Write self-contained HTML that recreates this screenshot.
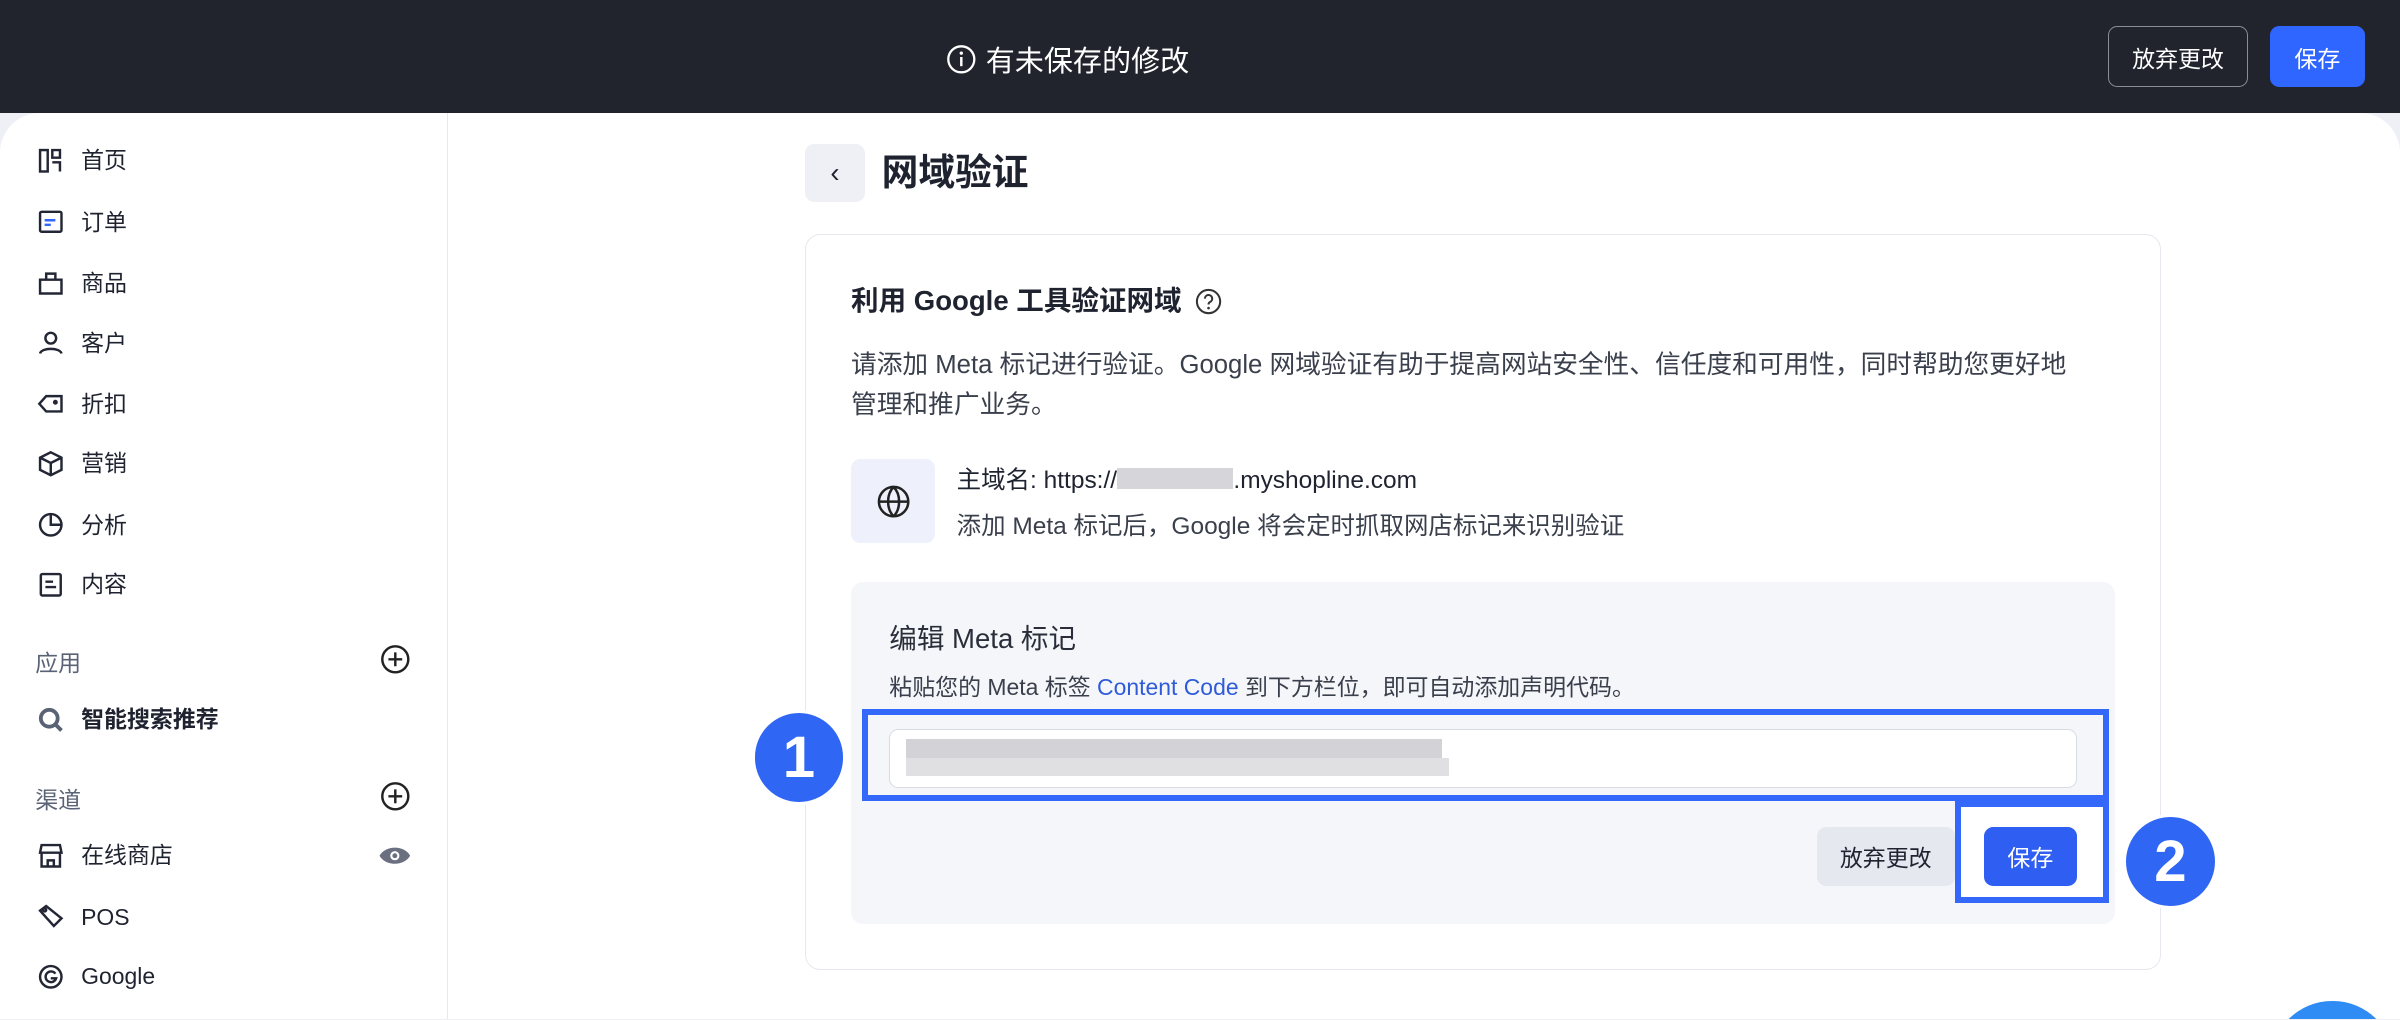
<!DOCTYPE html>
<html><head><meta charset="utf-8"><style>
*{box-sizing:border-box;margin:0;padding:0}
html,body{width:2400px;height:1020px;overflow:hidden;background:#eef0f6}
#w{zoom:1.530612;width:1568px;height:666px;overflow:hidden;position:relative;font-family:"Liberation Sans","Noto Sans CJK SC",sans-serif;color:#1f2330}
.a{position:absolute}
.top{left:0;top:0;width:1568px;height:74px;background:#21232d}
.page{left:0;top:74px;width:1568px;height:600px;background:#fff;border-radius:26px 26px 0 0}
.side{left:0;top:74px;width:293px;height:600px;border-right:1px solid #e6e8ee}
.it{position:absolute;left:24px;font-size:15px;display:flex;align-items:center;height:20px;line-height:20px}
.it svg{width:18px;height:18px;margin-right:11px;fill:none;stroke:#232634;stroke-width:1.6}
.sec{position:absolute;left:23px;font-size:15px;color:#5a6276}
.plus{position:absolute;left:248px;width:20px;height:20px}
.btn{position:absolute;border-radius:6px;font-size:15px;display:flex;align-items:center;justify-content:center}
.circ{position:absolute;border-radius:50%;background:#2f66f4;color:#fff;font-size:38px;font-weight:bold;display:flex;align-items:center;justify-content:center;border:2px solid #fff}
.px{position:absolute;background:#d4d4d8}
</style></head><body><div id="w">
<div class="a top"></div>
<div class="a" style="left:618px;top:25px;color:#fff;font-size:19px;display:flex;align-items:center">
<svg width="20" height="20" viewBox="0 0 20 20" style="margin-right:6px"><circle cx="10" cy="10" r="8.5" fill="none" stroke="#fff" stroke-width="1.5"/><circle cx="10" cy="6" r="1.1" fill="#fff"/><path d="M10 8.5v6" stroke="#fff" stroke-width="1.6"/></svg>有未保存的修改</div>
<div class="btn" style="left:1377px;top:17px;width:92px;height:40px;border:1px solid #8a8d96;color:#fff">放弃更改</div>
<div class="btn" style="left:1483px;top:17px;width:62px;height:40px;background:#2f66ff;color:#fff">保存</div>
<div class="a page"></div>
<div class="a side">
<div class="it" style="top:21px"><svg viewBox="0 0 18 18"><rect x="2" y="2" width="5" height="14"/><path d="M10 2h5v5h-5zM10 10h5v6"/></svg>首页</div>
<div class="it" style="top:61px"><svg viewBox="0 0 18 18"><rect x="2" y="2.5" width="14" height="13" rx="1"/><path d="M5 8h7M5 11h4" stroke="#2f66ff"/></svg>订单</div>
<div class="it" style="top:101px"><svg viewBox="0 0 18 18"><path d="M2 7h14v9H2zM6 7V3h6v4"/></svg>商品</div>
<div class="it" style="top:140px"><svg viewBox="0 0 18 18"><circle cx="9" cy="6" r="3.5"/><path d="M2 16c1-4 13-4 14 0"/></svg>客户</div>
<div class="it" style="top:180px"><svg viewBox="0 0 18 18"><path d="M1.5 9L6 4h10v10H6z"/><circle cx="12" cy="8" r=".8"/></svg>折扣</div>
<div class="it" style="top:219px"><svg viewBox="0 0 18 18"><path d="M9 1.5l7 3.5v8l-7 3.5-7-3.5V5zM2 5l7 3.5L16 5M9 8.5v8"/></svg>营销</div>
<div class="it" style="top:259px"><svg viewBox="0 0 18 18"><circle cx="9" cy="9" r="7"/><path d="M9 2v7h7"/></svg>分析</div>
<div class="it" style="top:298px"><svg viewBox="0 0 18 18"><rect x="2.5" y="2" width="13" height="14" rx="1"/><path d="M5.5 7h5M5.5 10.5h7"/></svg>内容</div>
<div class="sec" style="top:347px">应用</div>
<svg class="plus" style="top:347px" viewBox="0 0 20 20"><circle cx="10" cy="10" r="8.5" fill="none" stroke="#222" stroke-width="1.6"/><path d="M10 5.5v9M5.5 10h9" stroke="#222" stroke-width="1.6"/></svg>
<div class="it" style="top:386px;font-weight:bold"><svg viewBox="0 0 18 18" style="stroke:#5a6276;stroke-width:2.5"><circle cx="8" cy="8" r="5.5"/><path d="M12 12l4 4"/></svg>智能搜索推荐</div>
<div class="sec" style="top:436px">渠道</div>
<svg class="plus" style="top:436px" viewBox="0 0 20 20"><circle cx="10" cy="10" r="8.5" fill="none" stroke="#222" stroke-width="1.6"/><path d="M10 5.5v9M5.5 10h9" stroke="#222" stroke-width="1.6"/></svg>
<div class="it" style="top:475px"><svg viewBox="0 0 18 18"><path d="M3 2h12l1 5H2zM3 7v9h12V7M7 16v-4h4v4"/></svg>在线商店</div>
<svg class="a" style="left:247px;top:478px" width="22" height="14" viewBox="0 0 22 14"><path d="M1 7C5 0 17 0 21 7 17 14 5 14 1 7z" fill="#6b7080"/><circle cx="11" cy="7" r="3" fill="#fff"/><circle cx="11" cy="7" r="1.6" fill="#6b7080"/></svg>
<div class="it" style="top:515px"><svg viewBox="0 0 18 18"><path d="M2 5l4-3 10 8-5 5z"/><circle cx="5" cy="4.5" r="1"/></svg>POS</div>
<div class="it" style="top:554px"><svg viewBox="0 0 18 18"><circle cx="9" cy="9" r="7"/><path d="M12 7a3.5 3.5 0 1 0 0.5 3H9"/></svg>Google</div>
</div>
<div class="btn" style="left:526px;top:94px;width:39px;height:38px;background:#eef0f6;font-size:18px">‹</div>
<div class="a" style="left:576px;top:99px;font-size:24px;font-weight:bold;line-height:28px">网域验证</div>
<div class="a" style="left:526px;top:153px;width:886px;height:481px;border:1px solid #e6e8ee;border-radius:10px"></div>
<div class="a" style="left:556px;top:185px;font-size:18px;font-weight:bold;display:flex;align-items:center;line-height:24px">利用 Google 工具验证网域<svg width="19" height="19" viewBox="0 0 20 20" style="margin-left:8px"><circle cx="10" cy="10" r="8" fill="none" stroke="#333" stroke-width="1.4"/><path d="M7.5 8a2.5 2.5 0 1 1 3.5 2.3c-.8.4-1 .9-1 1.7" fill="none" stroke="#333" stroke-width="1.4"/><circle cx="10" cy="14.5" r=".9" fill="#333"/></svg></div>
<div class="a" style="left:556px;top:226px;width:840px;font-size:16.8px;line-height:26px;color:#3a3f4c">请添加 Meta 标记进行验证。Google 网域验证有助于提高网站安全性、信任度和可用性，同时帮助您更好地<br>管理和推广业务。</div>
<div class="a" style="left:556px;top:300px;width:55px;height:55px;background:#eef1fb;border-radius:6px"></div>
<svg class="a" style="left:572px;top:316px" width="23" height="23" viewBox="0 0 24 24" fill="none" stroke="#222" stroke-width="1.7"><circle cx="12" cy="12" r="10"/><path d="M2 12h20M12 2c-5 5-5 15 0 20M12 2c5 5 5 15 0 20"/></svg>
<div class="a" style="left:625px;top:303px;font-size:16px;line-height:22px">主域名: https://<span style="display:inline-block;width:76px;height:14px;background:#d6d6da;vertical-align:-1px"></span>.myshopline.com</div>
<div class="a" style="left:625px;top:333px;font-size:16px;line-height:22px;color:#3a3f4c">添加 Meta 标记后，Google 将会定时抓取网店标记来识别验证</div>
<div class="a" style="left:556px;top:380px;width:826px;height:224px;background:#f5f6fa;border-radius:8px"></div>
<div class="a" style="left:581px;top:406px;font-size:18px;line-height:24px;color:#2a2e3a">编辑 Meta 标记</div>
<div class="a" style="left:581px;top:439px;font-size:15px;line-height:20px;color:#3a3f4c">粘贴您的 Meta 标签 <span style="color:#2f5bd9">Content Code</span> 到下方栏位，即可自动添加声明代码。</div>
<div class="a" style="left:563px;top:463px;width:815px;height:60px;border:4px solid #3468fb"></div>
<div class="a" style="left:581px;top:476px;width:776px;height:39px;background:#fff;border:1px solid #d9dbe2;border-radius:6px"></div>
<div class="px" style="left:592px;top:483px;width:350px;height:12px;background:#d3d3d7"></div>
<div class="px" style="left:592px;top:495px;width:355px;height:12px;background:#e0e0e3"></div>
<div class="btn" style="left:1187px;top:540px;width:90px;height:39px;background:#e6e8f0">放弃更改</div>
<div class="a" style="left:1277px;top:523px;width:101px;height:67px;border:4px solid #3468fb;background:#fff"></div>
<div class="btn" style="left:1296px;top:540px;width:61px;height:39px;background:#2f5ef2;color:#fff">保存</div>
<div class="circ" style="left:491px;top:464px;width:62px;height:62px">1</div>
<div class="circ" style="left:1387px;top:532px;width:62px;height:62px">2</div>
<div class="a" style="left:1484px;top:654px;width:80px;height:80px;border-radius:50%;background:#2f8cf5"></div>
</div></body></html>
